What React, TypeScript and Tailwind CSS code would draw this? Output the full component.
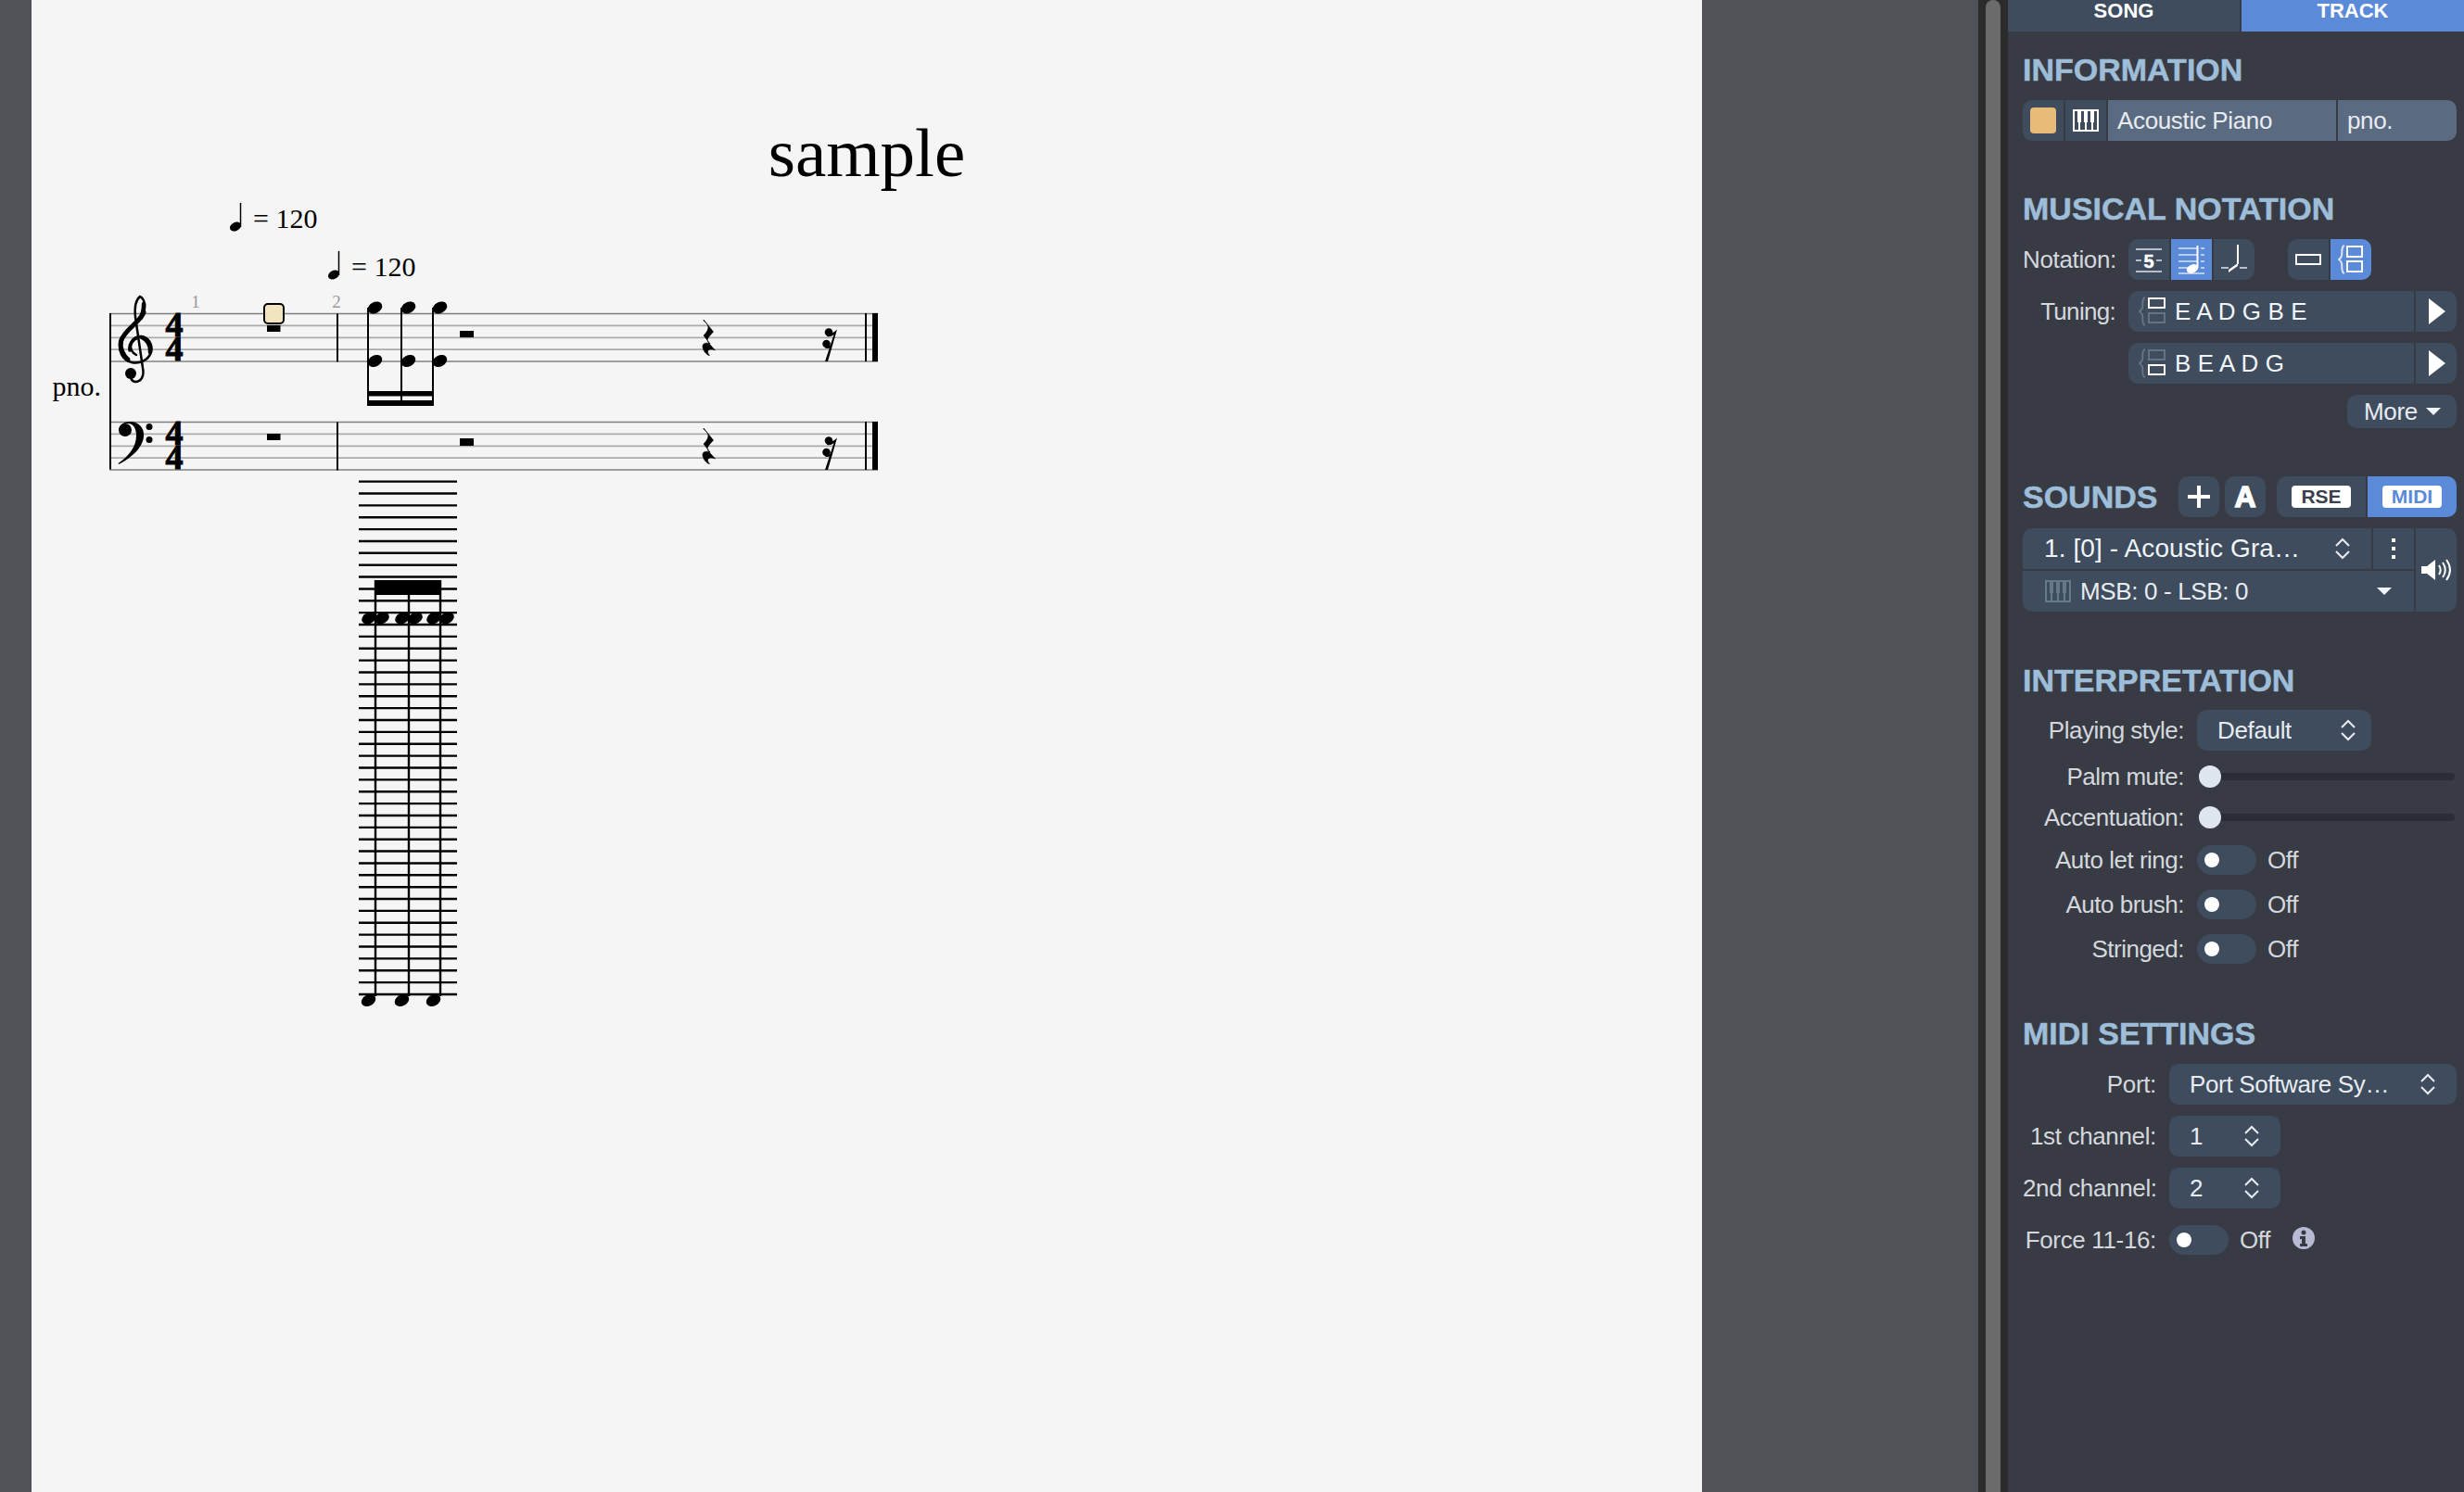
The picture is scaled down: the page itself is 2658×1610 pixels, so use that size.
import type { ReactNode } from "react";

const STAFF_TOPS = [338.5, 455.5];

function Chevrons() {
  return (
    <svg width="18" height="24" viewBox="0 0 18 24" fill="none" stroke="#e8ecf1" strokeWidth="2">
      <path d="M2 9l7-7 7 7M2 15l7 7 7-7" />
    </svg>
  );
}

function Caret({ width = 16 }: { width?: number }) {
  return (
    <svg width={width} height="8" viewBox="0 0 16 8">
      <path d="M0 0h16l-8 8z" fill="#f1f5f9" />
    </svg>
  );
}

function PianoIcon({ color = "#fff" }: { color?: string }) {
  return (
    <svg width="28" height="24" viewBox="0 0 28 24" fill="none">
      <rect x="1" y="1" width="26" height="22" stroke={color} strokeWidth="2" />
      <path d="M5 1h4v13H5zM12 1h4v13h-4zM19 1h4v13h-4z" fill={color} />
      <path d="M7 14v9M14 14v9M21 14v9" stroke={color} strokeWidth="2" />
    </svg>
  );
}

function TuningIcon({ active }: { active: "top" | "bottom" }) {
  const on = "#ffffff";
  const off = "#66727f";
  return (
    <svg width="30" height="32" viewBox="0 0 30 32" fill="none">
      <path d="M7 1C3 2 5 8 4 12c-.5 2-1.500 3-3 4 1.500 1 2.500 2 3 4 1 4-1 10 3 11" stroke={off} strokeWidth="2" />
      <rect x="11" y="2" width="17" height="10" stroke={active === "top" ? on : off} strokeWidth="2" />
      <rect x="11" y="18" width="17" height="10" stroke={active === "bottom" ? on : off} strokeWidth="2" />
    </svg>
  );
}

function SegButton({ className = "", children }: { className?: string; children: ReactNode }) {
  return <div className={`flex h-[44px] items-center justify-center ${className}`}>{children}</div>;
}

function Heading({ className, children }: { className: string; children: ReactNode }) {
  return (
    <h2 className={`h-[34px] text-[34px] leading-[34px] font-bold tracking-normal text-[#9dbdd9] [-webkit-text-stroke:0.5px_#9dbdd9] ${className}`}>
      {children}
    </h2>
  );
}

function Select({ className, label }: { className: string; label: string }) {
  return (
    <div className={`flex h-[44px] items-center justify-between rounded-[10px] bg-[#3e4c5e] pl-[22px] text-[#e8ecf1] ${className}`}>
      <span className="truncate">{label}</span>
      <Chevrons />
    </div>
  );
}

function Toggle() {
  return (
    <div className="flex h-[32px] w-[64px] items-center rounded-full bg-[#3e4c5e] pl-[8px]">
      <div className="h-[16px] w-[16px] rounded-full bg-white" />
    </div>
  );
}

function FormRow({ label, className, children }: { label: string; className: string; children: ReactNode }) {
  return (
    <div className={`flex items-center gap-[14px] ${className}`}>
      <span className="w-[174px] text-right tracking-[-0.5px] text-[#d4d8dd]">{label}</span>
      {children}
    </div>
  );
}

function MidiRow({ label, className, children }: { label: string; className: string; children: ReactNode }) {
  return (
    <div className={`flex items-center gap-[14px] ${className}`}>
      <span className="w-[144px] text-right whitespace-nowrap text-[#d4d8dd]">{label}</span>
      {children}
    </div>
  );
}

function Slider({ label, className }: { label: string; className: string }) {
  return (
    <FormRow label={label} className={`h-[24px] ${className}`}>
      <div className="relative ml-[2px] flex h-[24px] w-[276px] items-center">
        <div className="h-[8px] w-full rounded-full bg-[#2a2d38]" />
        <div className="absolute top-0 left-0 h-[24px] w-[24px] rounded-full bg-[#dfe6ef]" />
      </div>
    </FormRow>
  );
}

function ToggleRow({ label, className }: { label: string; className: string }) {
  return (
    <FormRow label={label} className={className}>
      <Toggle />
      <span className="ml-[-2px] text-[#d4d8dd]">Off</span>
    </FormRow>
  );
}

function TuningRow({ className, active, notes }: { className: string; active: "top" | "bottom"; notes: string }) {
  return (
    <div className={`flex h-[44px] gap-[2px] ${className}`}>
      <div className="flex w-[308px] items-center gap-[9px] rounded-l-[10px] bg-[#3e4c5e] pl-[11px] text-[#f1f5f9]">
        <TuningIcon active={active} />
        <span className="tracking-[0.1px]">{notes}</span>
      </div>
      <div className="flex w-[44px] items-center justify-center rounded-r-[10px] bg-[#3e4c5e] pl-[2px]">
        <svg width="18" height="28" viewBox="0 0 18 28">
          <path d="M0 0l18 14L0 28z" fill="#fff" />
        </svg>
      </div>
    </div>
  );
}

function Sidebar() {
  return (
    <aside className="flex h-full w-[492px] flex-col bg-[#383b44] text-[26px] leading-[34px] tracking-[-0.35px]">
      <div className="flex h-[34px] gap-[2px] text-[22px] leading-[23px] font-bold tracking-normal text-white">
        <div className="w-[250px] bg-[#3e4c5e] text-center">SONG</div>
        <div className="w-[240px] bg-[#5b8ad8] text-center">TRACK</div>
      </div>
      <div className="flex flex-col pr-[8px] pl-[16px]">
        <Heading className="mt-[24px]">INFORMATION</Heading>
        <div className="mt-[16px] flex h-[44px] gap-[2px]">
          <SegButton className="w-[44px] rounded-l-[10px] bg-[#3e4c5e]">
            <div className="h-[28px] w-[28px] rounded-[4px] bg-[#e8bb78]" />
          </SegButton>
          <SegButton className="w-[44px] bg-[#3e4c5e]">
            <PianoIcon />
          </SegButton>
          <div className="flex w-[246px] items-center bg-[#5a6a80] pl-[10px] text-[#e8ecf1]">Acoustic Piano</div>
          <div className="flex w-[128px] items-center rounded-r-[10px] bg-[#5a6a80] pl-[10px] text-[#e8ecf1]">pno.</div>
        </div>

        <Heading className="mt-[56px]">MUSICAL NOTATION</Heading>
        <div className="mt-[16px] flex h-[44px] items-center">
          <span className="w-[100px] text-right text-[#d4d8dd]">Notation:</span>
          <div className="ml-[14px] flex gap-[2px]">
            <SegButton className="w-[44px] rounded-l-[10px] bg-[#3e4c5e]">
              <svg width="30" height="30" viewBox="0 0 30 30" stroke="#b6bec9" strokeWidth="2" fill="none">
                <path d="M1 4h28M1 28h28M1 16h6M23 16h6" />
                <text x="15" y="23.500" textAnchor="middle" fontSize="20" fontWeight="700" fill="#fff" stroke="#fff" strokeWidth="0.5" fontFamily="Liberation Sans">5</text>
              </svg>
            </SegButton>
            <SegButton className="w-[44px] bg-[#5b8ad8]">
              <svg width="30" height="32" viewBox="0 0 30 32" fill="none">
                <path d="M1 4h20M25 4h4M1 11h20M25 11h4M1 18h20M25 18h4M1 25h10M25 25h4M1 31h28" stroke="#b9cdf0" strokeWidth="2" />
                <path d="M21.500 1v24" stroke="#fff" strokeWidth="2" />
                <ellipse cx="16" cy="26" rx="6.500" ry="4.500" fill="#fff" transform="rotate(-25 16 26)" />
              </svg>
            </SegButton>
            <SegButton className="w-[44px] rounded-r-[10px] bg-[#3e4c5e]">
              <svg width="30" height="32" viewBox="0 0 30 32" fill="none">
                <path d="M1 25h8M21 25h8" stroke="#b6bec9" strokeWidth="2" />
                <path d="M19 0v21" stroke="#fff" strokeWidth="2" />
                <path d="M9 27l10-7v3L9 30z" fill="#fff" />
              </svg>
            </SegButton>
          </div>
          <div className="ml-[36px] flex gap-[2px]">
            <SegButton className="w-[44px] rounded-l-[10px] bg-[#3e4c5e]">
              <svg width="28" height="12" viewBox="0 0 28 12" fill="none">
                <rect x="1" y="1" width="26" height="10" stroke="#fff" strokeWidth="2" />
              </svg>
            </SegButton>
            <SegButton className="w-[44px] rounded-r-[10px] bg-[#5b8ad8]">
              <svg width="28" height="32" viewBox="0 0 28 32" fill="none">
                <path d="M7 1C3 2 5 8 4 12c-.5 2-1.500 3-3 4 1.500 1 2.500 2 3 4 1 4-1 10 3 11" stroke="#dbe6f8" strokeWidth="2" />
                <rect x="10" y="2" width="16" height="11" stroke="#fff" strokeWidth="2" />
                <rect x="10" y="18" width="16" height="11" stroke="#fff" strokeWidth="2" />
              </svg>
            </SegButton>
          </div>
        </div>
        <div className="mt-[12px] flex h-[44px] items-center">
          <span className="w-[100px] text-right tracking-[-0.7px] text-[#d4d8dd]">Tuning:</span>
          <TuningRow className="ml-[14px]" active="top" notes="E A D G B E" />
        </div>
        <TuningRow className="mt-[12px] ml-[114px]" active="bottom" notes="B E A D G" />
        <div className="mt-[12px] flex h-[36px] w-[118px] items-center gap-[9px] self-end rounded-[10px] bg-[#3e4c5e] pl-[18px] text-[#e8ecf1]">
          <span>More</span>
          <Caret />
        </div>

        <div className="mt-[52px] flex h-[44px] items-center">
          <span className="w-[168px] text-[34px] leading-[34px] font-bold tracking-normal text-[#9dbdd9] [-webkit-text-stroke:0.5px_#9dbdd9]">SOUNDS</span>
          <SegButton className="w-[44px] rounded-[10px] bg-[#3e4c5e]">
            <svg width="24" height="24" viewBox="0 0 24 24">
              <path d="M10 0h4v10h10v4H14v10h-4V14H0v-4h10z" fill="#fff" />
            </svg>
          </SegButton>
          <SegButton className="ml-[6px] w-[44px] rounded-[10px] bg-[#3e4c5e] text-[32px] font-bold tracking-normal text-white [-webkit-text-stroke:1.5px_#fff]">
            A
          </SegButton>
          <SegButton className="ml-[12px] w-[96px] rounded-l-[10px] bg-[#3e4c5e]">
            <div className="flex h-[24px] w-[64px] items-center justify-center rounded-[4px] bg-white text-[21px] font-bold tracking-normal text-[#3a3f4b]">RSE</div>
          </SegButton>
          <SegButton className="ml-[2px] w-[96px] rounded-r-[10px] bg-[#5b8ad8]">
            <div className="flex h-[24px] w-[64px] items-center justify-center rounded-[4px] bg-white text-[21px] font-bold tracking-normal text-[#5b8ad8]">MIDI</div>
          </SegButton>
        </div>
        <div className="mt-[12px] flex h-[90px] gap-[2px]">
          <div className="flex w-[422px] flex-col gap-[2px]">
            <div className="flex h-[44px] gap-[2px]">
              <div className="flex w-[376px] items-center justify-between rounded-tl-[10px] bg-[#3e4c5e] pr-[22px] pl-[23px] text-[28px] tracking-[0.1px] text-[#f1f5f9]">
                <span>1. [0] - Acoustic Gra…</span>
                <Chevrons />
              </div>
              <div className="flex w-[44px] flex-col items-center justify-center gap-[5px] bg-[#3e4c5e]">
                <div className="h-[4px] w-[4px] bg-white" />
                <div className="h-[4px] w-[4px] bg-white" />
                <div className="h-[4px] w-[4px] bg-white" />
              </div>
            </div>
            <div className="flex h-[44px] items-center rounded-bl-[10px] bg-[#3e4c5e] pr-[24px] pl-[24px] text-[#e8ecf1]">
              <PianoIcon color="#64798a" />
              <span className="ml-[10px]">MSB: 0 - LSB: 0</span>
              <span className="ml-auto flex">
                <Caret />
              </span>
            </div>
          </div>
          <div className="flex w-[44px] items-center justify-center rounded-r-[10px] bg-[#3e4c5e]">
            <svg width="32" height="26" viewBox="0 0 32 26" fill="none">
              <path d="M0 9h6l9-7v22l-9-7H0z" fill="#fff" />
              <path d="M19 8c2 3 2 7 0 10M23 5c3.500 5 3.500 11 0 16M27 2c5 7 5 15 0 22" stroke="#fff" strokeWidth="2" />
            </svg>
          </div>
        </div>

        <Heading className="mt-[57px]">INTERPRETATION</Heading>
        <FormRow label="Playing style:" className="mt-[15px]">
          <Select className="w-[188px] pr-[16px]" label="Default" />
        </FormRow>
        <Slider label="Palm mute:" className="mt-[16px]" />
        <Slider label="Accentuation:" className="mt-[20px]" />
        <ToggleRow label="Auto let ring:" className="mt-[18px] h-[32px]" />
        <ToggleRow label="Auto brush:" className="mt-[16px] h-[32px]" />
        <ToggleRow label="Stringed:" className="mt-[16px] h-[32px]" />

        <Heading className="mt-[58px]">MIDI SETTINGS</Heading>
        <MidiRow label="Port:" className="mt-[16px]">
          <Select className="w-[310px] pr-[22px]" label="Port Software Sy…" />
        </MidiRow>
        <MidiRow label="1st channel:" className="mt-[12px]">
          <Select className="w-[120px] pr-[22px]" label="1" />
        </MidiRow>
        <MidiRow label="2nd channel:" className="mt-[12px]">
          <Select className="w-[120px] pr-[22px]" label="2" />
        </MidiRow>
        <MidiRow label="Force 11-16:" className="mt-[18px] h-[32px]">
          <Toggle />
          <span className="ml-[-2px] text-[#d4d8dd]">Off</span>
          <svg className="mt-[-4px] ml-[10px]" width="24" height="24" viewBox="0 0 24 24">
            <circle cx="12" cy="12" r="12" fill="#b8b9d2" />
            <circle cx="12" cy="6" r="2.500" fill="#383b44" />
            <path d="M8 10h6v8h2v3H8v-3h2v-5H8z" fill="#383b44" />
          </svg>
        </MidiRow>
      </div>
    </aside>
  );
}

function Head({ x, y }: { x: number; y: number }) {
  return <ellipse cx={x} cy={y} rx="8.200" ry="6" transform={`rotate(-28 ${x} ${y})`} fill="#000" />;
}

function Staff({ top }: { top: number }) {
  return (
    <g>
      <path d={`M118 ${top}H947`} stroke="#808080" strokeWidth="1.500" />
      <path d={`M118 ${top + 12.9}H947M118 ${top + 25.8}H947M118 ${top + 38.7}H947`} stroke="#ababab" strokeWidth="1.800" />
      <path d={`M118 ${top + 51.5}H947`} stroke="#808080" strokeWidth="1.500" />
      <path d={`M364 ${top}v52`} stroke="#000" strokeWidth="2" />
      <path d={`M934 ${top - 0.5}v52`} stroke="#000" strokeWidth="2" />
      <rect x="941" y={top - 0.5} width="6" height="52" fill="#000" />
    </g>
  );
}

function TimeSig({ y }: { y: number }) {
  return (
    <text y={y + 25} fontFamily="Liberation Serif" fontWeight="700" fontSize="38" textAnchor="middle" fill="#000" stroke="#000" strokeWidth="1">
      <tspan x="188">4</tspan>
      <tspan x="188" dy="26">4</tspan>
    </text>
  );
}

function QuarterRest({ dy }: { dy: number }) {
  return (
    <path
      transform={`translate(0 ${dy})`}
      d="M759 345L769.500 358C766 362 763.500 364 763 367C763 369 768 374 771.500 378C767 376 763 377 763.500 380C763.500 381 764.500 382.500 765.500 383.500L764.500 383.500C760 381 757.500 376 758 373C758.500 370 762.500 369.500 766 371L759 362C762 359 764 356 764 353C764 351 761.500 348 759 346z"
      fill="#000"
      stroke="#000"
      strokeWidth="0.600"
    />
  );
}

function SixteenthRest({ dy }: { dy: number }) {
  return (
    <g transform={`translate(0 ${dy})`} fill="#000">
      <path d="M890 390L899.500 361C897 363 895 363.500 892 363L893 360C897 360.500 900 358.500 903 355.500L893 390z" />
      <circle cx="894" cy="358.500" r="4.300" />
      <circle cx="891.500" cy="371" r="4.300" />
      <path d="M891 374C894 374.500 896 373 898 371L897 374.500C895 376 893 376.500 890 375.500z" />
    </g>
  );
}

function Tempo({ dx, dy }: { dx: number; dy: number }) {
  return (
    <g transform={`translate(${dx} ${dy})`}>
      <path d="M259.500 219v26" stroke="#000" strokeWidth="1.500" />
      <ellipse cx="254" cy="244.500" rx="6.400" ry="4.600" transform="rotate(-28 254 244.500)" fill="#000" />
      <text x="273" y="245.500" fontFamily="Liberation Serif" fontSize="30" fill="#000">= 120</text>
    </g>
  );
}

function Score() {
  const ledgers = Array.from({ length: 44 }, (_, i) => 519.6 + 12.87 * i);
  const stems = [405, 441, 475];
  const upper = [397, 433, 467];

  return (
    <svg width="1000" height="900" viewBox="34 210 1000 900" className="block">
      <Tempo dx={0} dy={0} />
      <Tempo dx={106} dy={52} />

      {STAFF_TOPS.map((top) => (
        <Staff key={top} top={top} />
      ))}
      <path d="M119 338v168.500" stroke="#000" strokeWidth="2" />

      {/* treble clef */}
      <g fill="none" stroke="#000" strokeLinecap="round">
        <path d="M147 383C139 379 138 366 150 363C160 362 165 372 163 380C160 389 150 393 142 391C132 389 127 378 130 368C134 356 152 348 156 333C157 326 154 321 151 320C146 324 145 332 146 342L154 397C156 406 152 412 146 412C143 412 141 409 141 406" strokeWidth="2.500" />
        <path d="M155 337C152 347 134 356 130.500 368C129 376 133 384 138 388" strokeWidth="5" />
        <path d="M153 364C158 366 163 372 162 380" strokeWidth="4.500" />
        <path d="M155 328C155.500 334 154 338 152 343" strokeWidth="4.500" />
        <path d="M140 378C139 372 143 366 149 364" strokeWidth="3.500" />
      </g>
      <circle cx="141" cy="403" r="6" fill="#000" />

      {/* bass clef */}
      <path d="M128 464C129 458 134 455 140 455C150 455 156 462 155 471C154 483 142 494 128 501L127.500 500C139 492 147 482 147 470C147 461 143 457 138 457C134 457 131 459 130 462z" fill="#000" />
      <circle cx="135" cy="464" r="7" fill="#000" />
      <circle cx="161" cy="460.500" r="3.500" fill="#000" />
      <circle cx="161" cy="474.500" r="3.500" fill="#000" />

      <TimeSig y={338} />
      <TimeSig y={455} />

      <text x="211" y="332" fontFamily="Liberation Serif" fontSize="19" textAnchor="middle" fill="#999">1</text>
      <text x="363" y="332" fontFamily="Liberation Serif" fontSize="19" textAnchor="middle" fill="#999">2</text>
      <text x="109" y="427" fontFamily="Liberation Serif" fontSize="30" textAnchor="end" fill="#000">pno.</text>

      {/* bar 1 */}
      <rect x="288" y="351" width="14.500" height="7" fill="#000" />
      <rect x="285" y="328" width="21" height="21" rx="4" fill="#f3e4c0" stroke="#000" strokeWidth="2" />
      <rect x="288" y="468" width="14.500" height="7" fill="#000" />

      {/* bar 2, upper staff */}
      {upper.map((x) => (
        <g key={x}>
          <path d={`M${x} 332V438`} stroke="#000" strokeWidth="2" />
          <Head x={x + 7.500} y={332} />
          <Head x={x + 7.500} y={389.500} />
        </g>
      ))}
      <rect x="396" y="422" width="72" height="5.500" fill="#000" />
      <rect x="396" y="432" width="72" height="6" fill="#000" />
      <rect x="496" y="357" width="15" height="7" fill="#000" />
      <rect x="496" y="473" width="15" height="8" fill="#000" />
      <QuarterRest dy={0} />
      <QuarterRest dy={117} />
      <SixteenthRest dy={0} />
      <SixteenthRest dy={117} />

      {/* the out of range chord */}
      {ledgers.map((y) => (
        <path key={y} d={`M387 ${y}H493`} stroke="#000" strokeWidth="2.400" />
      ))}
      <rect x="404" y="626" width="72" height="16" fill="#000" />
      {stems.map((x) => (
        <g key={x}>
          <path d={`M${x} 626V1075`} stroke="#000" strokeWidth="2.400" />
          <Head x={x - 7} y={667} />
          <Head x={x + 7} y={667} />
          <Head x={x - 7.500} y={1079.500} />
        </g>
      ))}
    </svg>
  );
}

export default function App() {
  return (
    <div className="flex h-[1610px] w-[2658px] overflow-hidden bg-[#505257] font-['Liberation_Sans',sans-serif]">
      <div className="w-[34px] shrink-0" />
      <main className="w-[1802px] shrink-0 bg-[#f5f5f5]">
        <h1 className="h-[210px] pt-[122px] text-center font-['Liberation_Serif',serif] text-[75px] leading-[86px] text-black">sample</h1>
        <Score />
      </main>
      <div className="w-[298px] shrink-0" />
      <div className="flex w-[32px] shrink-0 justify-center bg-[#2b2b2b] pr-[1px]">
        <div className="h-full w-[16px] rounded-t-[8px] bg-[#6b6b6b]" />
      </div>
      <Sidebar />
    </div>
  );
}
